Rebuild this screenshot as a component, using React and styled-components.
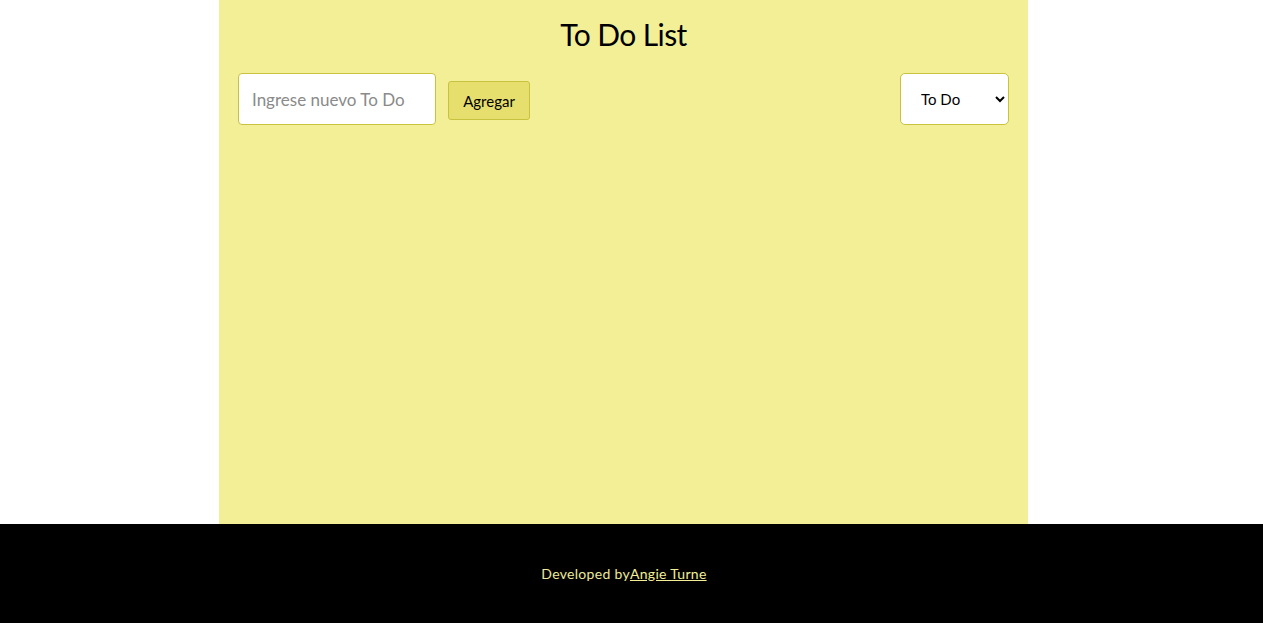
import React from "react";
import styled, { createGlobalStyle } from "styled-components";

const Global = createGlobalStyle`
  html, body { margin: 0; padding: 0; }
  body { font-family: Lato, "Open Sans", sans-serif; background: #fff; }
`;

const Page = styled.div`
  display: flex;
  flex-direction: column;
  min-height: 623px;
`;

const Panel = styled.main`
  width: 809px;
  height: 524px;
  margin-left: 219px;
  background: #f3ef97;
  box-sizing: border-box;
  padding: 14px 19px 0;
  display: flex;
  flex-direction: column;
`;

const Title = styled.h1`
  margin: 0 0 19px;
  text-align: center;
  font-weight: 400;
  font-size: 30px;
  line-height: 40px;
  color: #000;
  letter-spacing: -0.6px;
`;

const Toolbar = styled.div`
  display: flex;
  align-items: center;
  gap: 12px;
`;

const TextInput = styled.input`
  width: 198px;
  height: 52px;
  box-sizing: border-box;
  border: 1px solid #c9c23f;
  border-radius: 4px;
  background: #fff;
  padding: 0 13px;
  font-family: inherit;
  font-size: 17px;
  outline: none;
  caret-color: #000;
  &::placeholder { color: #8a8a8a; }
`;

const Button = styled.button`
  width: 82px;
  height: 39px;
  box-sizing: border-box;
  border: 1px solid #c9c23f;
  border-radius: 3px;
  background: #e6df6e;
  font-family: inherit;
  font-size: 15px;
  color: #000;
  cursor: pointer;
  margin-top: 3px;
`;

const Select = styled.select`
  margin-left: auto;
  width: 109px;
  height: 52px;
  box-sizing: border-box;
  border: 1px solid #c9c23f;
  border-radius: 5px;
  background: #fff;
  font-family: inherit;
  font-size: 15px;
  padding: 0 16px;
  color: #000;
`;

const Footer = styled.footer`
  height: 99px;
  background: #000;
  display: flex;
  align-items: center;
  justify-content: center;
  padding-right: 15px;
  color: #ecea9c;
  font-size: 14px;
  letter-spacing: 0.3px;
`;

const Link = styled.a`
  color: #f3ef97;
  text-decoration: underline;
`;

export default function App() {
  return (
    <Page>
      <Global />
      <Panel>
        <Title>To Do List</Title>
        <Toolbar>
          <TextInput placeholder="Ingrese nuevo To Do" autoFocus />
          <Button>Agregar</Button>
          <Select defaultValue="todo">
            <option value="todo">To Do</option>
            <option value="done">Done</option>
            <option value="all">All</option>
          </Select>
        </Toolbar>
      </Panel>
      <Footer>
        Developed by<Link href="#">Angie Turne</Link>
      </Footer>
    </Page>
  );
}
